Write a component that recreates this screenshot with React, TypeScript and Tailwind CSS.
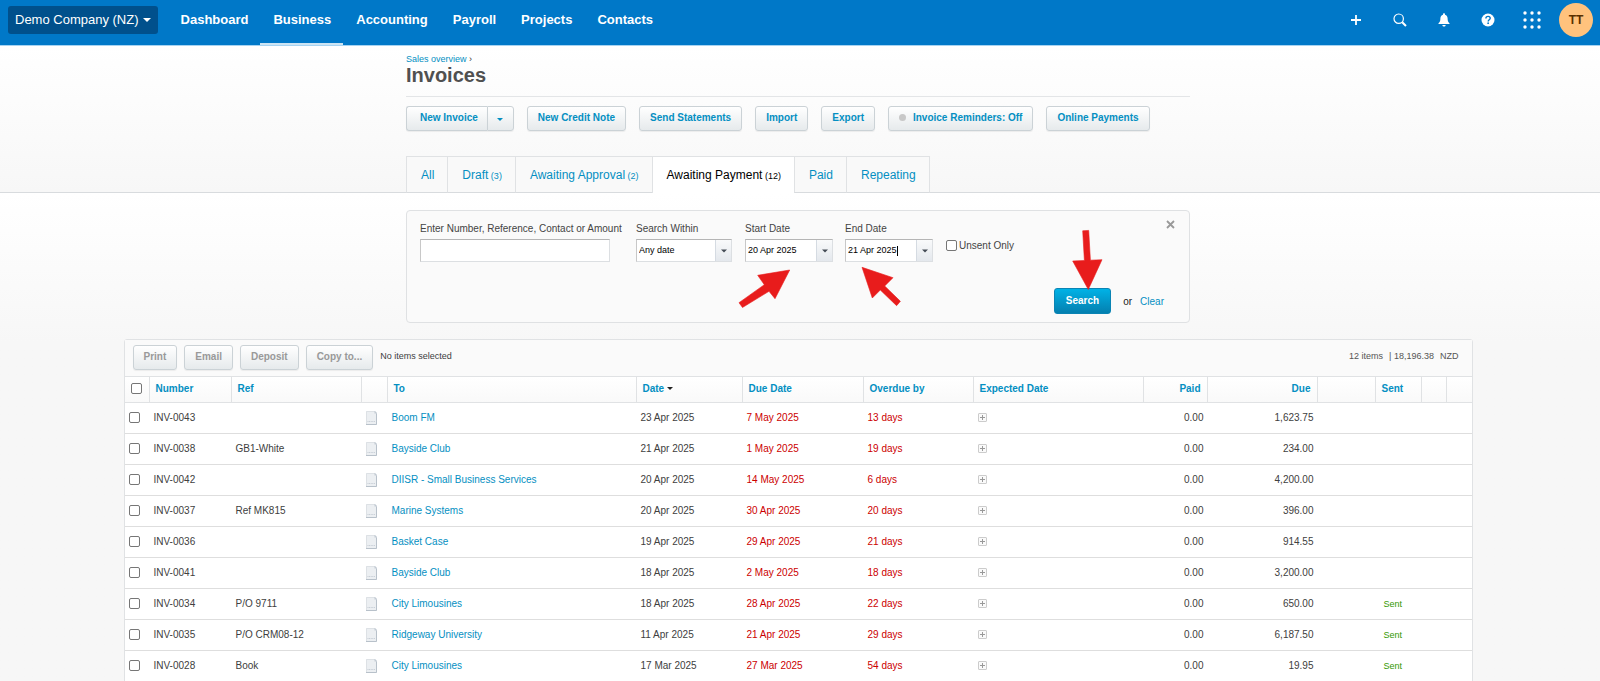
import React from "react";

type Invoice = {
  number: string;
  reference: string;
  contact: string;
  date: string;
  due: string;
  overdue: string;
  amount: string;
  sent: boolean;
};

const invoices: Invoice[] = [
  { number: "INV-0043", reference: "", contact: "Boom FM", date: "23 Apr 2025", due: "7 May 2025", overdue: "13 days", amount: "1,623.75", sent: false },
  { number: "INV-0038", reference: "GB1-White", contact: "Bayside Club", date: "21 Apr 2025", due: "1 May 2025", overdue: "19 days", amount: "234.00", sent: false },
  { number: "INV-0042", reference: "", contact: "DIISR - Small Business Services", date: "20 Apr 2025", due: "14 May 2025", overdue: "6 days", amount: "4,200.00", sent: false },
  { number: "INV-0037", reference: "Ref MK815", contact: "Marine Systems", date: "20 Apr 2025", due: "30 Apr 2025", overdue: "20 days", amount: "396.00", sent: false },
  { number: "INV-0036", reference: "", contact: "Basket Case", date: "19 Apr 2025", due: "29 Apr 2025", overdue: "21 days", amount: "914.55", sent: false },
  { number: "INV-0041", reference: "", contact: "Bayside Club", date: "18 Apr 2025", due: "2 May 2025", overdue: "18 days", amount: "3,200.00", sent: false },
  { number: "INV-0034", reference: "P/O 9711", contact: "City Limousines", date: "18 Apr 2025", due: "28 Apr 2025", overdue: "22 days", amount: "650.00", sent: true },
  { number: "INV-0035", reference: "P/O CRM08-12", contact: "Ridgeway University", date: "11 Apr 2025", due: "21 Apr 2025", overdue: "29 days", amount: "6,187.50", sent: true },
  { number: "INV-0028", reference: "Book", contact: "City Limousines", date: "17 Mar 2025", due: "27 Mar 2025", overdue: "54 days", amount: "19.95", sent: true },
];

const navItems = ["Dashboard", "Business", "Accounting", "Payroll", "Projects", "Contacts"];

const tabs = [
  { label: "All" },
  { label: "Draft", count: 3 },
  { label: "Awaiting Approval", count: 2 },
  { label: "Awaiting Payment", count: 12, active: true },
  { label: "Paid" },
  { label: "Repeating" },
];

const buttonBase =
  "flex h-[25px] items-center rounded-[3px] border border-[#cbd2d6] bg-linear-to-b from-white to-[#e6eaec] pb-[2px] text-[10px] font-bold whitespace-nowrap shadow-[0_1px_1px_rgba(0,0,0,0.06)]";
const checkbox =
  "block size-[11px] shrink-0 appearance-none rounded-[2px] border border-[#767676] bg-white checked:bg-[#0078c8]";

function Caret({ className }: { className: string }) {
  return (
    <svg viewBox="0 0 8 4" className={className} aria-hidden="true">
      <path d="M0 0h8L4 4z" fill="currentColor" />
    </svg>
  );
}

function Header() {
  return (
    <header className="flex h-[46px] items-stretch border-b border-[#a6d3f2] bg-[#0078c8] pr-[7px] pl-2 text-white">
      <button type="button" className="mt-[6px] flex h-7 items-center gap-1 rounded-[3px] bg-[#00508c] px-[7px] text-[13px] whitespace-nowrap">
        Demo Company (NZ)
        <Caret className="h-1 w-2" />
      </button>
      <nav aria-label="Main" className="ml-[10px] flex flex-1">
        {navItems.map((item) => (
          <a
            key={item}
            href="#"
            className={`flex items-center border-b-2 pr-3 pl-[13px] pb-[3px] text-[13px] font-bold ${item === "Business" ? "border-[#cce4f4]" : "border-transparent"}`}
          >
            {item}
          </a>
        ))}
      </nav>
      <div className="flex h-10 items-center">
        <button type="button" aria-label="Create new" className="flex w-11 justify-center">
          <svg viewBox="0 0 12 12" className="size-3">
            <path d="M6 1v10M1 6h10" stroke="currentColor" strokeWidth="1.8" fill="none" />
          </svg>
        </button>
        <button type="button" aria-label="Search" className="flex w-11 justify-center">
          <svg viewBox="0 0 14 14" className="size-[14px]" fill="none" stroke="currentColor">
            <circle cx="5.7" cy="5.7" r="4.7" strokeWidth="1.2" />
            <path d="M9.2 9.2l3.8 3.8" strokeWidth="2" />
          </svg>
        </button>
        <button type="button" aria-label="Notifications" className="flex w-11 justify-center">
          <svg viewBox="0 0 12 14" className="h-[14px] w-3" fill="currentColor">
            <path d="M6 .3c.6 0 1 .4 1 1v.5c1.600.4 2.500 1.600 2.600 3.400.1 2.500.3 3.800 1.900 5v.9H.5v-.9c1.600-1.200 1.800-2.500 1.900-5C2.500 3.400 3.400 2.200 5 1.800v-.5c0-.6.4-1 1-1z" />
            <path d="M4.400 12h3.200c0 .9-.7 1.600-1.600 1.600S4.400 12.900 4.400 12z" />
          </svg>
        </button>
        <button type="button" aria-label="Help" className="flex w-11 justify-center">
          <svg viewBox="0 0 14 14" className="size-[14px]">
            <circle cx="7" cy="7" r="6.500" fill="currentColor" />
            <path d="M4.900 5.500c0-1.300.9-2.100 2.200-2.100s2.100.8 2.100 1.900c0 1.500-2 1.500-2 3.100" fill="none" stroke="#0078c8" strokeWidth="1.400" />
            <circle cx="7.150" cy="10.200" r=".9" fill="#0078c8" />
          </svg>
        </button>
        <button type="button" aria-label="Apps" className="flex w-11 justify-center">
          <svg viewBox="0 0 18 18" className="size-[18px]" fill="currentColor">
            {[2, 9, 16].map((y) => [2, 9, 16].map((x) => <circle key={`${x}-${y}`} cx={x} cy={y} r="1.700" />))}
          </svg>
        </button>
        <button type="button" aria-label="Account" className="ml-[5px] flex size-[34px] items-center justify-center rounded-full bg-[#ffc27d] text-[12px] font-bold text-[#5a3000]">
          TT
        </button>
      </div>
    </header>
  );
}

function Actions() {
  const padded = `${buttonBase} px-[10px] text-[#048fc2]`;
  return (
    <div className="mt-[9px] flex gap-[13px]">
      <div className="flex">
        <button type="button" className={`${buttonBase} rounded-r-none border-r-0 pr-[9px] pl-[13px] text-[#048fc2]`}>
          New Invoice
        </button>
        <button type="button" aria-label="More invoice options" className={`${buttonBase} w-[27px] justify-center rounded-l-none pt-1 text-[#048fc2]`}>
          <Caret className="h-[3px] w-[6px]" />
        </button>
      </div>
      <button type="button" className={padded}>New Credit Note</button>
      <button type="button" className={padded}>Send Statements</button>
      <button type="button" className={padded}>Import</button>
      <button type="button" className={padded}>Export</button>
      <button type="button" className={`${padded} gap-[7px]`}>
        <span className="size-[7px] rounded-full bg-[#c8c8c8]" />
        Invoice Reminders: Off
      </button>
      <button type="button" className={padded}>Online Payments</button>
    </div>
  );
}

function Tabs() {
  return (
    <nav aria-label="Invoice status" className="mt-[25px] -mb-px flex">
      {tabs.map((tab) => (
        <a
          key={tab.label}
          href="#"
          aria-current={tab.active ? "page" : undefined}
          className={`h-[37px] border-t border-l border-[#e0e2e4] pr-[13px] pl-[14px] text-[12px] leading-[37px] whitespace-nowrap last:border-r ${tab.active ? "bg-white text-black" : "border-b border-b-[#d8dbde] bg-[#f9f9f9] text-[#048fc2]"}`}
        >
          {tab.label}
          {tab.count !== undefined && <span className="text-[9px]"> ({tab.count})</span>}
        </a>
      ))}
    </nav>
  );
}

const fieldBox = "flex h-[23px] border border-[#dcdfe2] border-t-[#b5b5b5] border-l-[#c8c8c8] bg-white text-[9px] text-black";
const arrowBox = "flex w-4 shrink-0 items-center justify-center border-l border-[#d5dbe2] bg-linear-to-b from-[#f9fafb] to-[#e4e8ed] text-[#444b55]";

function DateField({ id, label, value, focused }: { id: string; label: string; value: string; focused?: boolean }) {
  return (
    <div className="w-[88px]">
      <label htmlFor={id} className="block pb-[2px] leading-4">{label}</label>
      <div className={fieldBox}>
        <div className="flex min-w-0 flex-1 items-center pl-[2px]">
          <input id={id} type="text" defaultValue={value} className="field-sizing-content min-w-0 outline-none" />
          {focused && <span className="h-[10px] w-px bg-black" />}
        </div>
        <button type="button" aria-label={`Choose ${label}`} className={arrowBox}>
          <Caret className="h-1 w-[6px]" />
        </button>
      </div>
    </div>
  );
}

function Filter() {
  return (
    <form className="relative mx-auto h-[113px] w-full max-w-[784px] rounded-[4px] border border-[#dfe1e3] bg-[#fafafa] pt-[10px] pr-[25px] pl-[13px] text-[10px] text-[#444]" onSubmit={(e) => e.preventDefault()}>
      <div className="flex items-start">
        <div className="w-[216px]">
          <label htmlFor="query" className="block pb-[2px] leading-4 whitespace-nowrap">Enter Number, Reference, Contact or Amount</label>
          <input id="query" type="text" className={`${fieldBox} w-[190px] px-1 outline-none`} />
        </div>
        <div className="w-24">
          <label htmlFor="within" className="block pb-[2px] leading-4">Search Within</label>
          <div className={`${fieldBox} relative`}>
            <select id="within" className="min-w-0 flex-1 appearance-none pl-[2px] outline-none">
              <option>Any date</option>
            </select>
            <span className={`${arrowBox} pointer-events-none`}>
              <Caret className="h-1 w-[6px]" />
            </span>
          </div>
        </div>
        <div className="ml-[13px]"><DateField id="start" label="Start Date" value="20 Apr 2025" /></div>
        <div className="ml-[12px]"><DateField id="end" label="End Date" value="21 Apr 2025" focused /></div>
        <label className="mt-[17px] ml-[13px] flex h-[14px] items-center gap-[2px] whitespace-nowrap">
          <input type="checkbox" className={checkbox} />
          Unsent Only
        </label>
      </div>
      <button type="button" aria-label="Close" className="absolute top-[9px] right-[14px] text-[#999]">
        <svg viewBox="0 0 9 9" className="size-[9px]">
          <path d="M1 1l7 7M8 1l-7 7" stroke="currentColor" strokeWidth="1.800" />
        </svg>
      </button>
      <div className="mt-[26px] flex items-center justify-end">
        <button type="submit" className="h-[26px] rounded-[3px] border border-[#0a84b4] bg-linear-to-b from-[#00b2e6] to-[#0480b0] px-[11px] pb-[2px] font-bold text-white">Search</button>
        <span className="mr-2 ml-3 text-[#222]">or</span>
        <a href="#" className="text-[#048fc2]">Clear</a>
      </div>
      <svg viewBox="406 210 784 113" className="pointer-events-none absolute -top-px -left-px h-[113px] w-[784px]" fill="#e81c1c" stroke="#e81c1c" strokeWidth=".6" aria-hidden="true">
        <path d="M789.700 270L757.700 275.300 764.300 284.700 739 302.700 742.500 307.500 769 291.300 775 298.700z" />
        <path d="M862 267.300L893 277.700 884.700 286 900.400 301.300 896.600 305.700 880.300 290 872.300 298z" />
        <path d="M1088.300 289.500L1072.700 261 1084.400 260.500 1082.700 230.800 1088.700 230.400 1090.400 260.200 1102 259.700z" />
      </svg>
    </form>
  );
}

function DocumentIcon() {
  return (
    <svg viewBox="0 0 11 14" className="mt-[2px] h-[14px] w-[11px]" role="img" aria-label="Document">
      <path d="M0 0h9l2 2v12H0z" fill="#eceff2" />
      <path d="M.5 13.500V.5H9" fill="none" stroke="#dde1e5" />
      <path d="M8.500 0H9l2 2v.5H8.500z" fill="#c3cbd3" />
      <path d="M10.500 2.500v11H0" fill="none" stroke="#b8c1ca" />
      <path d="M1.500 10.500h8" stroke="#c6cdd5" strokeDasharray="1 .6" />
    </svg>
  );
}

function InvoiceTable() {
  const th = "h-[26px] border-r border-b border-[#e0e2e4] px-[6px] pb-[3px] text-left font-bold text-[#048fc2] last:border-r-0";
  const td = "h-[31px] border-b border-[#dedede] px-1 pb-[2px]";
  const disabled = `${buttonBase} px-[10px] text-[#999]`;
  return (
    <section className="mx-auto mt-4 w-full max-w-[1349px] rounded-t-[3px] border border-[#e0e2e4] bg-white text-[10px] text-[#404040]">
      <div className="flex h-[37px] items-center border-b border-[#e0e2e4] bg-[#fafafa] pr-[13px] pb-[2px] pl-[8px] text-[9px]">
        <div className="flex gap-[7px]">
          <button type="button" disabled className={disabled}>Print</button>
          <button type="button" disabled className={disabled}>Email</button>
          <button type="button" disabled className={disabled}>Deposit</button>
          <button type="button" disabled className={disabled}>Copy to...</button>
        </div>
        <span className="ml-[7px] flex-1">No items selected</span>
        <span className="flex gap-[6px] text-[#555]"><span>12 items</span><span>| 18,196.38</span><span>NZD</span></span>
      </div>
      <table className="w-full table-fixed border-separate border-spacing-0">
        <colgroup>
          <col className="w-[25px]" /><col className="w-[82px]" /><col className="w-[130px]" /><col className="w-[26px]" />
          <col /><col className="w-[106px]" /><col className="w-[121px]" /><col className="w-[110px]" />
          <col className="w-[170px]" /><col className="w-[64px]" /><col className="w-[110px]" /><col className="w-[58px]" />
          <col className="w-[46px]" /><col className="w-[25px]" /><col className="w-[25px]" />
        </colgroup>
        <thead className="bg-linear-to-b from-white to-[#f9f9f9]">
          <tr>
            <th className={th}><input type="checkbox" aria-label="Select all" className={checkbox} /></th>
            <th className={th}>Number</th>
            <th className={th}>Ref</th>
            <th className={th} />
            <th className={th}>To</th>
            <th className={th}>
              <button type="button" className="flex items-center gap-[3px]">
                Date
                <Caret className="mt-px h-[3px] w-[6px] text-[#222]" />
              </button>
            </th>
            <th className={th}>Due Date</th>
            <th className={th}>Overdue by</th>
            <th className={th}>Expected Date</th>
            <th className={`${th} text-right`}>Paid</th>
            <th className={`${th} text-right`}>Due</th>
            <th className={th} />
            <th className={th}>Sent</th>
            <th className={th} />
            <th className={th} />
          </tr>
        </thead>
        <tbody>
          {invoices.map((row) => (
            <tr key={row.number}>
              <td className={td}><input type="checkbox" aria-label={`Select ${row.number}`} className={checkbox} /></td>
              <td className={td}>{row.number}</td>
              <td className={td}>{row.reference}</td>
              <td className={td}><DocumentIcon /></td>
              <td className={td}><a href="#" className="text-[#048fc2]">{row.contact}</a></td>
              <td className={td}>{row.date}</td>
              <td className={`${td} text-[#cc0000]`}>{row.due}</td>
              <td className={`${td} text-[#cc0000]`}>{row.overdue}</td>
              <td className={td}>
                <button type="button" aria-label="Add expected date" className="flex size-[9px] items-center justify-center rounded-[1px] border border-[#ccc] bg-[#fafafa]">
                  <svg viewBox="0 0 5 5" className="size-[5px]"><path d="M2.500 0v5M0 2.500h5" stroke="#999" /></svg>
                </button>
              </td>
              <td className={`${td} text-right`}>0.00</td>
              <td className={`${td} text-right`}>{row.amount}</td>
              <td className={td} />
              <td className="h-[31px] border-b border-[#dedede] pl-2 text-[9px] leading-[15px] text-[#339900]">{row.sent ? "Sent" : ""}</td>
              <td className={td} />
              <td className={td} />
            </tr>
          ))}
        </tbody>
      </table>
    </section>
  );
}

export default function App() {
  return (
    <div className="min-h-screen bg-[#f7f7f7] font-['Liberation_Sans',Arial,sans-serif]">
      <Header />
      <div className="border-b border-[#d8dbde] bg-linear-to-b from-white to-[#f7f7f7] pr-[4px]">
        <div className="mx-auto w-full max-w-[784px] pt-[7px]">
          <a href="#" className="block text-[9px] leading-[12px] text-[#048fc2]">
            Sales overview <span className="text-[#333]">›</span>
          </a>
          <h1 className="border-b border-[#e3e5e7] pb-[10px] text-[20px] leading-[21px] font-bold text-[#505050]">Invoices</h1>
          <Actions />
          <Tabs />
        </div>
      </div>
      <main className="bg-linear-to-b from-white to-[#f7f7f7] to-[150px] pt-[17px] pr-[4px]">
        <Filter />
        <InvoiceTable />
      </main>
    </div>
  );
}
